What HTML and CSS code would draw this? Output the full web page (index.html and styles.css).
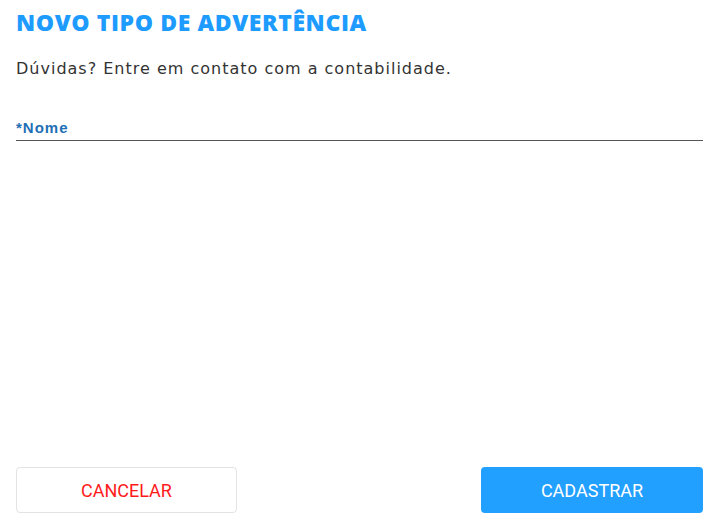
FILE: index.html
```html
<!DOCTYPE html>
<html lang="pt">
<head>
<meta charset="utf-8">
<title>Novo tipo de advertência</title>
<link rel="stylesheet" href="styles.css">
</head>
<body>
<div class="page">
  <h1 class="title">NOVO TIPO DE ADVERTÊNCIA</h1>
  <p class="hint">Dúvidas? Entre em contato com a contabilidade.</p>
  <div class="field">
    <label class="label" for="nome">*Nome</label>
    <input class="input" id="nome" type="text">
  </div>
  <div class="actions">
    <button class="btn btn-cancel" type="button">CANCELAR</button>
    <button class="btn btn-primary" type="button">CADASTRAR</button>
  </div>
</div>
</body>
</html>
```
FILE: styles.css
```css
html, body {
  margin: 0;
  padding: 0;
  background: #fff;
}
.page {
  box-sizing: border-box;
  height: 528px;
  padding: 8px 9px 15px 16px;
  display: flex;
  flex-direction: column;
  font-family: "Open Sans", "Noto Sans", sans-serif;
}
.title {
  margin: 0;
  font-size: 23px;
  line-height: 28px;
  font-weight: 800;
  color: #1e9bff;
  letter-spacing: 0.6px;
}
.hint {
  margin: 23px 0 0;
  font-family: "DejaVu Sans", "Open Sans", sans-serif;
  font-size: 16px;
  line-height: 20px;
  color: #333;
  letter-spacing: 1px;
}
.field {
  margin-top: 41px;
  display: flex;
  flex-direction: column;
}
.label {
  font-family: "Liberation Sans", Arial, sans-serif;
  font-weight: 700;
  font-size: 15px;
  line-height: 16px;
  color: #1f6fb5;
  letter-spacing: 1px;
}
.input {
  border: none;
  border-bottom: 1px solid #555;
  height: 4px;
  padding: 0;
  outline: none;
}
.actions {
  margin-top: auto;
  display: flex;
  justify-content: space-between;
}
.btn {
  width: 222px;
  height: 46px;
  border-radius: 4px;
  font-family: Roboto, "Liberation Sans", sans-serif;
  font-size: 18px;
  cursor: pointer;
}
.btn-cancel {
  width: 221px;
  background: #fff;
  border: 1px solid #e3e3e3;
  color: #ff1a1a;
}
.btn-primary {
  background: #22a0ff;
  border: none;
  color: #fff;
}
```
